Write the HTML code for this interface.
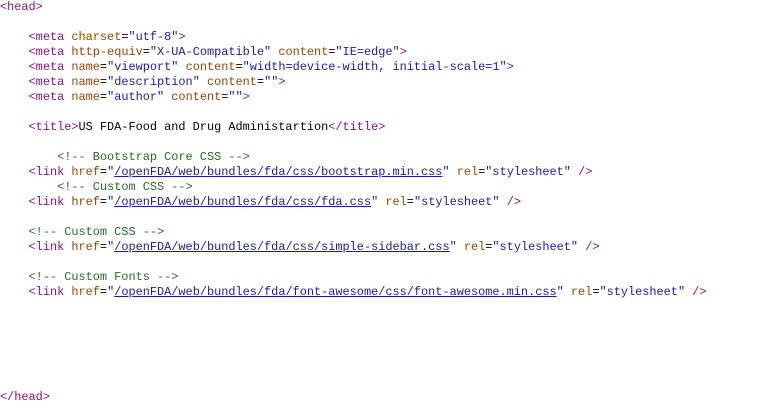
<!DOCTYPE html>
<html><head><meta charset="utf-8"><style>
html,body{margin:0;background:#fff;}
pre{margin:0;position:absolute;top:0px;left:0;font-family:"Liberation Mono",monospace;font-size:11.9px;line-height:15px;color:#000;}
.t{color:#881280}.a{color:#994500}.v{color:#1a1aa6}.c{color:#236e25}
a{color:#1a1aa6;text-decoration:underline}
</style></head><body><pre><span class="t">&lt;head&gt;</span>

    <span class="t">&lt;meta</span> <span class="a">charset</span>=<span class="v">"utf-8"</span><span class="t">&gt;</span>
    <span class="t">&lt;meta</span> <span class="a">http-equiv</span>=<span class="v">"X-UA-Compatible"</span> <span class="a">content</span>=<span class="v">"IE=edge"</span><span class="t">&gt;</span>
    <span class="t">&lt;meta</span> <span class="a">name</span>=<span class="v">"viewport"</span> <span class="a">content</span>=<span class="v">"width=device-width, initial-scale=1"</span><span class="t">&gt;</span>
    <span class="t">&lt;meta</span> <span class="a">name</span>=<span class="v">"description"</span> <span class="a">content</span>=<span class="v">""</span><span class="t">&gt;</span>
    <span class="t">&lt;meta</span> <span class="a">name</span>=<span class="v">"author"</span> <span class="a">content</span>=<span class="v">""</span><span class="t">&gt;</span>

    <span class="t">&lt;title&gt;</span>US FDA-Food and Drug Administartion<span class="t">&lt;/title&gt;</span>

        <span class="c">&lt;!-- Bootstrap Core CSS --&gt;</span>
    <span class="t">&lt;link</span> <span class="a">href</span>=<span class="v">"</span><a>/openFDA/web/bundles/fda/css/bootstrap.min.css</a><span class="v">"</span> <span class="a">rel</span>=<span class="v">"stylesheet"</span> <span class="t">/&gt;</span>
        <span class="c">&lt;!-- Custom CSS --&gt;</span>
    <span class="t">&lt;link</span> <span class="a">href</span>=<span class="v">"</span><a>/openFDA/web/bundles/fda/css/fda.css</a><span class="v">"</span> <span class="a">rel</span>=<span class="v">"stylesheet"</span> <span class="t">/&gt;</span>

    <span class="c">&lt;!-- Custom CSS --&gt;</span>
    <span class="t">&lt;link</span> <span class="a">href</span>=<span class="v">"</span><a>/openFDA/web/bundles/fda/css/simple-sidebar.css</a><span class="v">"</span> <span class="a">rel</span>=<span class="v">"stylesheet"</span> <span class="t">/&gt;</span>

    <span class="c">&lt;!-- Custom Fonts --&gt;</span>
    <span class="t">&lt;link</span> <span class="a">href</span>=<span class="v">"</span><a>/openFDA/web/bundles/fda/font-awesome/css/font-awesome.min.css</a><span class="v">"</span> <span class="a">rel</span>=<span class="v">"stylesheet"</span> <span class="t">/&gt;</span>






<span class="t">&lt;/head&gt;</span></pre></body></html>
